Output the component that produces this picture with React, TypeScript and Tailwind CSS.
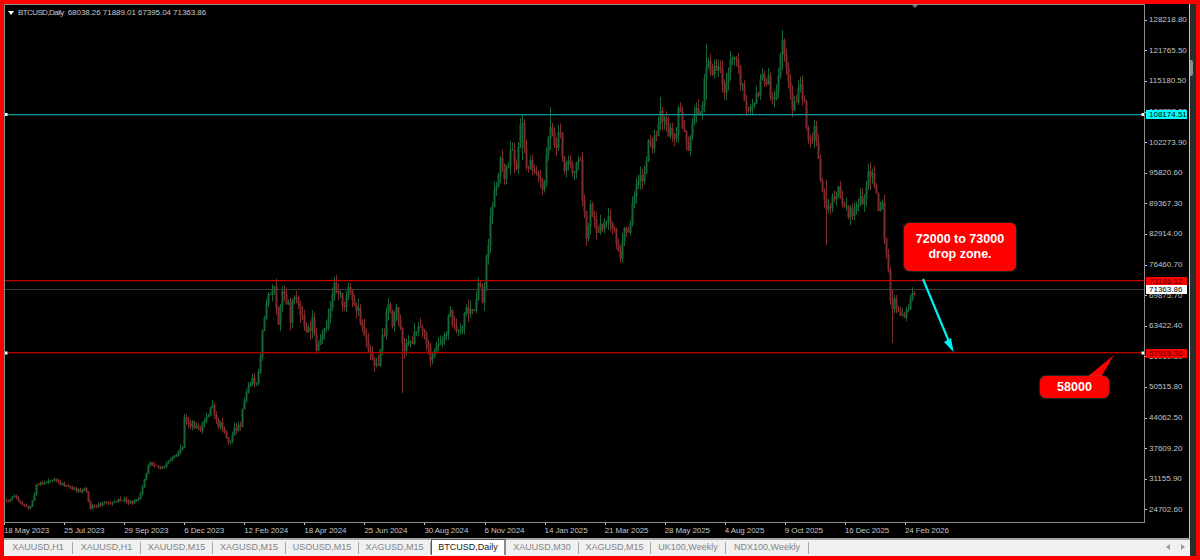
const prices = [
  "128218.80", "121765.50", "115180.50", "108727.20", "102273.90", "95820.60", "89367.30", "82914.00", "76460.70",
  "69875.70", "63422.40", "56969.10", "50515.80", "44062.50", "37609.20", "31155.90", "24702.60",
]

const dates = [
  "18 May 2023", "25 Jul 2023", "29 Sep 2023", "6 Dec 2023", "12 Feb 2024", "18 Apr 2024", "25 Jun 2024", "30 Aug 2024",
  "6 Nov 2024", "14 Jan 2025", "21 Mar 2025", "28 May 2025", "4 Aug 2025", "9 Oct 2025", "16 Dec 2025", "24 Feb 2026",
]

const tabs = [
  { label: "XAUUSD,H1", width: "w-[69px]" },
  { label: "XAUUSD,H1", width: "w-[68px]" },
  { label: "XAUUSD,M15", width: "w-[72px]" },
  { label: "XAGUSD,M15", width: "w-[73px]" },
  { label: "USOUSD,M15", width: "w-[73px]" },
  { label: "XAGUSD,M15", width: "w-[72px]" },
  { label: "BTCUSD,Daily", width: "w-[75px]", active: true },
  { label: "XAUUSD,M30", width: "w-[73px]" },
  { label: "XAGUSD,M15", width: "w-[72px]" },
  { label: "UK100,Weekly", width: "w-[75px]" },
  { label: "NDX100,Weekly", width: "w-[83px]" },
]

// rough path of the price, traced from the chart as x,y pairs
const path = [
  [5, 500], [10, 500], [14, 497], [20, 502], [29, 507], [34, 495], [36, 483], [42, 483], [55, 480], [65, 487], [80, 490],
  [86, 490], [88, 500], [89, 508], [100, 505], [115, 500], [125, 500], [133, 503], [140, 495], [146, 472], [150, 463],
  [160, 470], [180, 450], [182, 445], [183, 420], [190, 425], [200, 428], [213, 403], [215, 420], [225, 430], [228, 440],
  [240, 423], [245, 393], [250, 380], [256, 385], [260, 353], [262, 327], [266, 307], [270, 287], [273, 282], [278, 317],
  [283, 290], [290, 317], [295, 287], [305, 337], [312, 320], [316, 357], [330, 310], [334, 290], [345, 307], [349, 288],
  [360, 317], [365, 340], [375, 370], [380, 353], [388, 307], [392, 327], [395, 300], [400, 333], [402, 350], [410, 340],
  [420, 323], [430, 360], [440, 343], [450, 317], [460, 337], [465, 307], [475, 307], [478, 280], [483, 307], [486, 263],
  [489, 233], [491, 207], [495, 193], [499, 160], [505, 177], [508, 163], [512, 150], [516, 167], [521, 120], [525, 160],
  [530, 167], [535, 180], [540, 177], [543, 197], [548, 133], [550, 125], [555, 143], [560, 133], [563, 163], [570, 167],
  [580, 167], [583, 210], [586, 233], [590, 207], [596, 233], [603, 227], [607, 217], [612, 227], [617, 247], [620, 260],
  [624, 233], [630, 223], [634, 190], [640, 180], [645, 177], [648, 143], [655, 140], [660, 107], [665, 123], [670, 133],
  [675, 143], [677, 110], [685, 133], [688, 147], [692, 117], [700, 113], [703, 97], [706, 63], [712, 67], [718, 70],
  [725, 87], [731, 63], [735, 50], [740, 83], [745, 103], [750, 110], [755, 97], [762, 80], [767, 77], [772, 97], [775, 97],
  [780, 50], [782, 37], [785, 53], [788, 87], [792, 110], [796, 100], [800, 87], [804, 107], [808, 140], [814, 130],
  [818, 163], [822, 197], [827, 213], [833, 193], [840, 193], [845, 213], [852, 213], [858, 207], [864, 193], [870, 170],
  [874, 187], [878, 210], [882, 207], [884, 233], [886, 260], [889, 283], [891, 320], [893, 300], [897, 307], [903, 317],
  [907, 310], [912, 297], [914, 290],
]

// long wicks that random noise would not give
const wicks: Record<number, [number, number]> = {
  402: [330, 393],
  522: [114, 160],
  550: [107, 150],
  660: [97, 130],
  706: [44, 100],
  782: [30, 70],
  826: [180, 245],
  870: [163, 190],
  892: [290, 343],
}

function priceAt(x: number) {
  for (let i = 1; i < path.length; i++) {
    if (x <= path[i][0]) {
      const [x0, y0] = path[i - 1]
      const [x1, y1] = path[i]
      return y0 + ((y1 - y0) * (x - x0)) / (x1 - x0)
    }
  }
  return path[path.length - 1][1]
}

function makeBars() {
  let seed = 73186
  const rnd = () => {
    seed = (seed * 1664525 + 1013904223) % 4294967296
    return seed / 4294967296
  }
  const bars = []
  let open = priceAt(6)
  for (let x = 6; x <= 914; x += 2) {
    const amp = x < 180 ? 4 : x < 270 ? 8 : x > 886 ? 10 : 15
    const close = priceAt(x) + (rnd() - 0.5) * amp
    let high = Math.min(open, close) - rnd() * amp * 0.6
    let low = Math.max(open, close) + rnd() * amp * 0.6
    if (wicks[x]) {
      high = Math.min(high, wicks[x][0])
      low = Math.max(low, wicks[x][1])
    }
    bars.push({ x, open, close, high, low, up: close < open })
    open = close
  }
  return bars
}

const bars = makeBars()

function PriceTag({ text, className }: { text: string; className: string }) {
  return (
    <div className={`absolute left-[1px] flex h-[9px] w-[41px] items-center pl-[3px] text-[8px] ${className}`}>{text}</div>
  )
}

export default function App() {
  return (
    <div className="flex h-[560px] w-[1200px] overflow-hidden border-4 border-[#ff0000] bg-black font-['Liberation_Sans',Arial,sans-serif]">
      <div className="flex w-[1186px] shrink-0 flex-col">
        <div className="flex h-[534px] flex-col border-r border-[#c8c8c8]">
          <div className="flex h-[519px]">
            {/* Chart */}
            <div className="relative w-[1141px] shrink-0 border border-[#8c8c8c]">
              <svg className="block h-[517px] w-[1139px]" viewBox="5 5 1139 517">
                {bars.map((b) => (
                  <g key={b.x} fill={b.up ? "#176638" : "#7f2c2c"}>
                    <rect x={b.x} y={b.high} width="1" height={b.low - b.high} />
                    <rect x={b.x - 0.5} y={Math.min(b.open, b.close)} width="2" height={Math.abs(b.open - b.close) + 0.5} />
                  </g>
                ))}
                <rect x="5" y="114" width="1139" height="1.3" fill="#049a9a" />
                <rect x="5" y="280" width="1139" height="1.2" fill="#c80000" />
                <rect x="5" y="289" width="1139" height="1" fill="#3f3f3f" />
                <rect x="5" y="352" width="1139" height="1.4" fill="#b00000" />
                <rect x="4.5" y="113" width="3" height="3" fill="#fff" />
                <rect x="4.5" y="351.5" width="3" height="3" fill="#fff" />
                <rect x="1141.5" y="113" width="3" height="3" fill="#fff" />
                <rect x="1141.5" y="351.5" width="3" height="3" fill="#fff" />
                <polygon points="912,5 918,5 915,8" fill="#777" />
                {/* drop arrow */}
                <line x1="923" y1="279" x2="952" y2="349" stroke="#00f0f0" strokeWidth="2.2" />
                <polygon points="953.5,352 944,342 951,338" fill="#00f0f0" />
                {/* pointer of the 58000 note */}
                <polygon points="1087,377 1114,355 1101,377" fill="#ff0000" />
              </svg>

              <div className="absolute left-[2px] top-[2px] flex h-3 items-center text-[8px] text-[#c8c8c8]">
                <svg className="ml-[1px] mr-[4px]" width="6" height="4" viewBox="0 0 6 4">
                  <polygon points="0,0 6,0 3,4" fill="#fff" />
                </svg>
                <span className="mr-[4px] tracking-[-0.6px]">BTCUSD,Daily</span>
                <span className="tracking-[-0.05px]">68038.26 71889.01 67395.04 71363.86</span>
              </div>

              <div className="absolute left-[899px] top-[218px] flex h-[48px] w-[112px] flex-col items-center justify-center rounded-[6px] bg-[#ff0000] text-[12.5px] font-bold leading-[15px] text-white shadow-[0_0_2px_#777777]">
                <span>72000 to 73000</span>
                <span>drop zone.</span>
              </div>
              <div className="absolute left-[1035px] top-[371px] flex h-[22px] w-[69px] items-center justify-center rounded-[6px] bg-[#ff0000] text-[12.5px] font-bold text-white shadow-[0_0_2px_#777777]">
                58000
              </div>
            </div>

            {/* Price scale */}
            <div className="relative flex-1">
              <div className="flex flex-col pt-[1px]">
                {prices.map((p) => (
                  <div key={p} className="flex h-[30.6px] shrink-0 items-center text-[8px] text-[#c4c4c4]">
                    <div className="mr-[2px] h-px w-[2px] bg-[#c4c4c4]" />
                    {p}
                  </div>
                ))}
              </div>
              <PriceTag text="108174.51" className="top-[106px] bg-[#00ffff] text-black" />
              <PriceTag text="73186.12" className="top-[273px] bg-[#ff0000] text-[#500000]" />
              <PriceTag text="71363.86" className="top-[281px] bg-white text-black" />
              <PriceTag text="57915.36" className="top-[345px] bg-[#ff0000] text-[#500000]" />
            </div>
          </div>

          {/* Time scale */}
          <div className="flex h-[15px]">
            {dates.map((d) => (
              <div key={d} className="w-[60.07px] shrink-0">
                <div className="h-[2px] w-px bg-[#c4c4c4]" />
                <div className="mt-[1px] whitespace-nowrap text-[8px] leading-[10px] tracking-[-0.1px] text-[#c4c4c4]">{d}</div>
              </div>
            ))}
          </div>
        </div>

        {/* Tabs */}
        <div className="flex h-[18px] items-start border-t-2 border-[#a4a4a4] bg-[#f0f0f0]">
          {tabs.map((t, i) => (
            <div
              key={i}
              className={
                t.active
                  ? `flex h-[16px] ${t.width} -mt-[1px] items-center justify-center border-l border-t border-r-2 border-l-[#555555] border-t-[#555555] border-r-[#8a8a8a] bg-white text-[9px] text-[#222222]`
                  : `mt-[2px] flex h-[12px] ${t.width} items-center justify-center border-r border-[#a8a8a8] text-[9px] text-[#858585]`
              }
            >
              {t.label}
            </div>
          ))}
          <div className="ml-auto mr-[5px] mt-[4px] flex gap-[11px]">
            <svg width="4" height="6" viewBox="0 0 4 6">
              <polygon points="4,0 4,6 0,3" fill="#9a9a9a" />
            </svg>
            <svg width="4" height="6" viewBox="0 0 4 6">
              <polygon points="0,0 0,6 4,3" fill="#9a9a9a" />
            </svg>
          </div>
        </div>
      </div>

      {/* Outer scrollbar */}
      <div className="flex-1 bg-[#2c2c2c]">
        <div className="mt-[56px] h-[16px] w-[3px] rounded-r-[2px] bg-[#8c8c8c]" />
      </div>
    </div>
  )
}
